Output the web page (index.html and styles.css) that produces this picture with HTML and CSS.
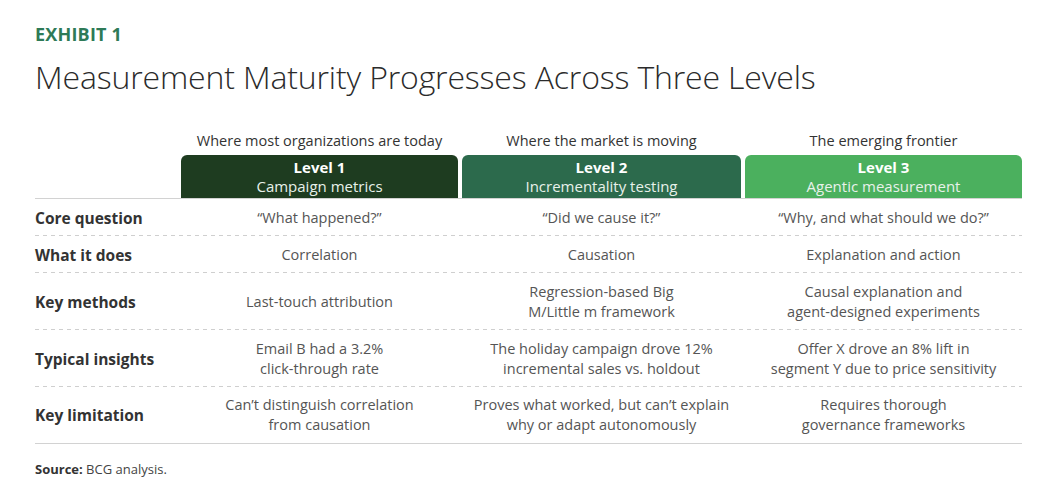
FILE: index.html
```html
<!DOCTYPE html>
<html lang="en">
<head>
<meta charset="utf-8">
<title>Exhibit 1</title>
<link rel="stylesheet" href="styles.css">
</head>
<body>
<div class="page">
  <div class="exhibit">EXHIBIT 1</div>
  <h1 class="title">Measurement Maturity Progresses Across Three Levels</h1>
  <div class="table">
    <div class="row sub">
      <div></div>
      <div class="subcell">Where most organizations are today</div>
      <div class="subcell">Where the market is moving</div>
      <div class="subcell">The emerging frontier</div>
    </div>
    <div class="row head">
      <div></div>
      <div class="lvl lvl1"><b>Level 1</b><span>Campaign metrics</span></div>
      <div class="lvl lvl2"><b>Level 2</b><span>Incrementality testing</span></div>
      <div class="lvl lvl3"><b>Level 3</b><span>Agentic measurement</span></div>
    </div>
    <div class="row body short">
      <div class="label">Core question</div>
      <div class="cell">“What happened?”</div>
      <div class="cell">“Did we cause it?”</div>
      <div class="cell">“Why, and what should we do?”</div>
    </div>
    <div class="row body short">
      <div class="label">What it does</div>
      <div class="cell">Correlation</div>
      <div class="cell">Causation</div>
      <div class="cell">Explanation and action</div>
    </div>
    <div class="row body">
      <div class="label">Key methods</div>
      <div class="cell">Last-touch attribution</div>
      <div class="cell">Regression-based Big<br>M/Little m framework</div>
      <div class="cell">Causal explanation and<br>agent-designed experiments</div>
    </div>
    <div class="row body">
      <div class="label">Typical insights</div>
      <div class="cell">Email B had a 3.2%<br>click-through rate</div>
      <div class="cell">The holiday campaign drove 12%<br>incremental sales vs. holdout</div>
      <div class="cell">Offer X drove an 8% lift in<br>segment Y due to price sensitivity</div>
    </div>
    <div class="row body last">
      <div class="label">Key limitation</div>
      <div class="cell">Can’t distinguish correlation<br>from causation</div>
      <div class="cell">Proves what worked, but can’t explain<br>why or adapt autonomously</div>
      <div class="cell">Requires thorough<br>governance frameworks</div>
    </div>
  </div>
  <p class="source"><b>Source:</b> BCG analysis.</p>
</div>
</body>
</html>
```

FILE: styles.css
```css
* { box-sizing: border-box; }
body {
  margin: 0;
  background: #fff;
  font-family: "Open Sans", "Noto Sans", sans-serif;
  color: #4a4a4a;
}
.page {
  padding: 22px 0 0 35px;
  width: 1022px;
}
.exhibit {
  font-size: 18px;
  line-height: 24px;
  font-weight: 700;
  color: #2e7a57;
  letter-spacing: 0.2px;
}
.title {
  margin: 9px 0 0;
  font-size: 32px;
  line-height: 44px;
  font-weight: 300;
  color: #2b2b2b;
  letter-spacing: -0.15px;
}
.table {
  margin-top: 24px;
}
.row {
  display: grid;
  grid-template-columns: 142px 277px 279px 277px;
  column-gap: 4px;
}
.sub {
  height: 32px;
  align-items: center;
  padding-top: 2px;
}
.subcell {
  text-align: center;
  font-size: 14.5px;
  color: #333;
}
.head {
  border-bottom: 1px solid #d2d2d2;
}
.lvl {
  height: 43px;
  border-radius: 6px 6px 0 0;
  color: #fff;
  display: flex;
  flex-direction: column;
  align-items: center;
  justify-content: center;
  font-size: 15px;
  line-height: 19px;
}
.lvl b { font-weight: 700; }
.lvl span { color: #e8f1ea; }
.lvl1 { background: #1e3c20; }
.lvl2 { background: #2c6a4c; }
.lvl3 { background: #4bb05e; }
.body {
  height: 57px;
  align-items: center;
  background-image: linear-gradient(to right, #cfcfcf 55%, transparent 55%);
  background-size: 8px 1px;
  background-repeat: repeat-x;
  background-position: left bottom;
}
.body.short { height: 37px; }
.body.last {
  background: none;
  border-bottom: 1px solid #d2d2d2;
}
.label {
  font-weight: 700;
  font-size: 15.5px;
  color: #333;
}
.cell {
  text-align: center;
  font-size: 14.5px;
  line-height: 20px;
  color: #555;
}
.source {
  margin: 16px 0 0;
  font-size: 13px;
  color: #444;
}
.source b { font-weight: 700; color: #333; }
```
